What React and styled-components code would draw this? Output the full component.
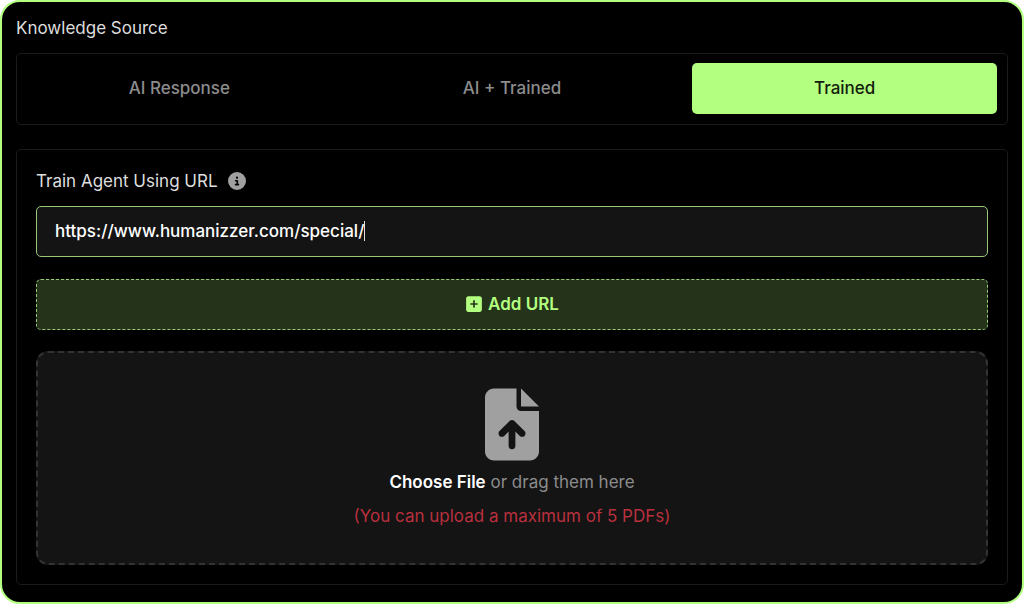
import React, { useState } from "react";
import styled, { createGlobalStyle } from "styled-components";
import { FaCircleInfo, FaFileArrowUp, FaSquarePlus } from "react-icons/fa6";

// knowledge source options
const sources = ["AI Response", "AI + Trained", "Trained"];

const App = () => {
  const [activeSource, setActiveSource] = useState("Trained");
  const [url, setUrl] = useState("https://www.humanizzer.com/special/");

  return (
    <>
      <GlobalStyle />
      <Card>
        <Title>Knowledge Source</Title>
        <Tabs>
          {sources.map((source) => (
            <TabButton
              type="button"
              key={source}
              $active={source === activeSource}
              aria-pressed={source === activeSource}
              onClick={() => setActiveSource(source)}
            >
              {source}
            </TabButton>
          ))}
        </Tabs>
        <Panel>
          <LabelRow>
            <label htmlFor="train-url">Train Agent Using URL</label>
            <InfoIcon />
          </LabelRow>
          <UrlField>
            <UrlInput
              id="train-url"
              type="text"
              value={url}
              spellCheck={false}
              onChange={(e) => setUrl(e.target.value)}
            />
            <Caret />
          </UrlField>
          <AddButton type="button">
            <FaSquarePlus size={18} />
            Add URL
          </AddButton>
          <DropZone htmlFor="train-file">
            <FileInput id="train-file" type="file" accept=".pdf" multiple />
            <FileIcon />
            <DropText>
              <strong>Choose File</strong> or drag them here
            </DropText>
            <LimitText>(You can upload a maximum of 5 PDFs)</LimitText>
          </DropZone>
        </Panel>
      </Card>
    </>
  );
};

const GlobalStyle = createGlobalStyle`
  :root {
    --main: #b3ff80;
    --line: #1b1b1b;
    --surface: #141414;
    --gray: #a0a0a0;
  }

  * {
    box-sizing: border-box;
  }

  body {
    margin: 0;
    background-color: white;
    font-family: Inter, sans-serif;
    font-size: 17px;
    line-height: 24px;
  }

  button,
  input {
    font: inherit;
  }
`;

const Card = styled.main`
  padding: 14px 14px 17px;
  border: 2px solid var(--main);
  border-radius: 20px;
  background-color: black;
  color: #dedede;
`;

const Title = styled.h1`
  margin: 0 0 13px;
  font-size: 17px;
  font-weight: 400;
`;

const Tabs = styled.div`
  display: flex;
  gap: 28px;
  padding: 9px 10px 10px;
  border: 1px solid var(--line);
  border-radius: 5px;
`;

const TabButton = styled.button`
  flex: 1;
  height: 51px;
  padding: 0 0 2px;
  border: none;
  border-radius: 5px;
  background-color: ${({ $active }) => ($active ? "var(--main)" : "transparent")};
  color: ${({ $active }) => ($active ? "#14200c" : "#8c8c8c")};
  font-weight: 500;
  cursor: pointer;
`;

const Panel = styled.section`
  display: flex;
  flex-direction: column;
  margin-top: 24px;
  padding: 19px;
  border: 1px solid var(--line);
  border-radius: 5px;
`;

const LabelRow = styled.div`
  display: flex;
  align-items: center;
  gap: 10px;
  margin-bottom: 13px;
`;

const InfoIcon = styled(FaCircleInfo)`
  width: 18px;
  height: 18px;
  color: var(--gray);
`;

const UrlField = styled.div`
  display: flex;
  align-items: center;
  height: 51px;
  padding: 0 18px 2px;
  border: 1px solid #98c878;
  border-radius: 5px;
  background-color: var(--surface);
`;

// grows with its text so the caret stays right after it
const UrlInput = styled.input`
  field-sizing: content;
  min-width: 1px;
  max-width: 100%;
  padding: 0;
  border: none;
  outline: none;
  background-color: transparent;
  caret-color: transparent;
  color: white;
  font-weight: 500;
`;

const Caret = styled.span`
  width: 1px;
  height: 20px;
  background-color: #dedede;
`;

const AddButton = styled.button`
  display: flex;
  align-items: center;
  justify-content: center;
  gap: 5px;
  height: 51px;
  margin: 22px 0 21px;
  padding: 0 0 2px;
  border: 1px dashed #98c878;
  border-radius: 5px;
  background-color: #26331b;
  color: var(--main);
  font-weight: 600;
  cursor: pointer;
`;

const DropZone = styled.label`
  display: flex;
  flex-direction: column;
  align-items: center;
  padding: 35px 20px;
  border: 2px dashed #333333;
  border-radius: 12px;
  background-color: var(--surface);
  cursor: pointer;
`;

const FileInput = styled.input`
  position: absolute;
  width: 1px;
  height: 1px;
  opacity: 0;
`;

const FileIcon = styled(FaFileArrowUp)`
  width: 54px;
  height: 73px;
  margin-bottom: 9px;
  color: var(--gray);
`;

const DropText = styled.span`
  color: #8c8c8c;

  & strong {
    color: white;
    font-weight: 600;
  }
`;

const LimitText = styled.span`
  margin-top: 10px;
  color: #b9303e;
`;

export default App;
